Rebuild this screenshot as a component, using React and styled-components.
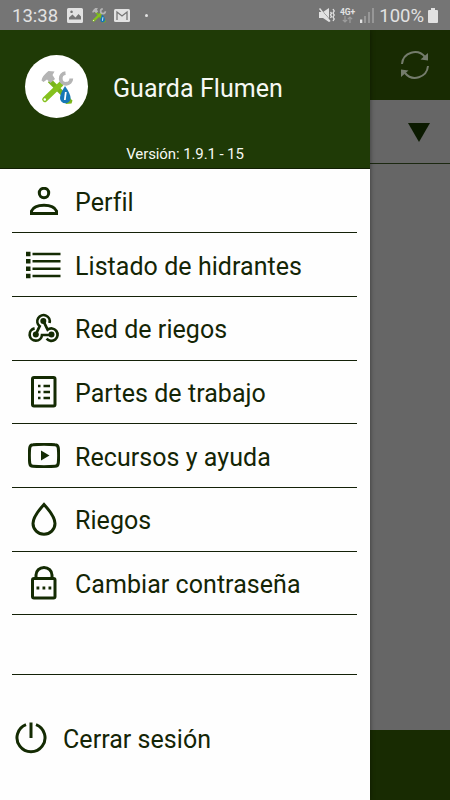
import styled, { createGlobalStyle } from "styled-components";

const MENU_ITEMS = [
  { label: "Perfil", Icon: PersonIcon },
  { label: "Listado de hidrantes", Icon: ListIcon },
  { label: "Red de riegos", Icon: NetworkIcon },
  { label: "Partes de trabajo", Icon: SheetIcon },
  { label: "Recursos y ayuda", Icon: VideoIcon },
  { label: "Riegos", Icon: DropIcon },
  { label: "Cambiar contraseña", Icon: LockIcon },
];

export default function App() {
  return (
    <>
      <GlobalStyle />
      <Phone>
        <StatusBar />
        <Screen>
          <ToolBar>
            <RefreshIcon />
          </ToolBar>
          <FilterBar>
            <Caret viewBox="0 0 22 19">
              <path d="M0 0h22L11 19z" fill="#0b1a00" />
            </Caret>
          </FilterBar>
          <Content />
          <BottomBar />
          <Drawer>
            <DrawerHeader>
              <Brand>
                <Avatar>
                  <ToolsIcon size={36} />
                </Avatar>
                <AppName>Guarda Flumen</AppName>
              </Brand>
              <Version>Versión: 1.9.1 - 15</Version>
            </DrawerHeader>
            <Menu>
              {MENU_ITEMS.map(({ label, Icon }) => (
                <MenuItem key={label}>
                  <IconSlot>
                    <Icon />
                  </IconSlot>
                  <Label>{label}</Label>
                </MenuItem>
              ))}
            </Menu>
            <Spacer />
            <Logout>
              <PowerIcon />
              <Label>Cerrar sesión</Label>
            </Logout>
          </Drawer>
        </Screen>
      </Phone>
    </>
  );
}

function StatusBar() {
  return (
    <StatusContainer>
      <StatusText>13:38</StatusText>
      <StatusIcons>
        <svg width="16" height="15" viewBox="0 0 16 15">
          <path
            fillRule="evenodd"
            fill="#e2e2e2"
            d="M1.5 0h13Q16 0 16 1.500v12Q16 15 14.500 15h-13Q0 15 0 13.500v-12Q0 0 1.500 0zM2 11.500h12V8.500l-2.500-2.500-3 3.500-3-3L2 9.500zM4.500 2.500a1.300 1.300 0 1 0 .1 0z"
          />
        </svg>
        <ToolsIcon size={16} />
        <svg width="16" height="13" viewBox="0 0 16 13">
          <rect width="16" height="13" rx="1.500" fill="#e2e2e2" />
          <path
            d="M3 11V3l5 4 5-4v8"
            fill="none"
            stroke="#757575"
            strokeWidth="1.300"
          />
        </svg>
        <Dot />
      </StatusIcons>
      <StatusRight>
        <svg width="16" height="16" viewBox="0 0 16 16">
          <path d="M0 5h4l6-4v14l-6-4H0z" fill="#e2e2e2" />
          <path d="M0 0l11 13" stroke="#757575" strokeWidth="1" />
          <path d="M.5 1.500l10.500 13" stroke="#e2e2e2" strokeWidth="1.400" />
          <path
            d="M11.500 5l1 1.200-1 1.600 1 1.600-1 1.600M14 2l1.200 2-1.200 2 1.200 2-1.200 2 1.200 2-1.200 2"
            fill="none"
            stroke="#e2e2e2"
            strokeWidth="1.300"
          />
        </svg>
        <Network>
          <span>4G+</span>
          <svg width="11" height="7" viewBox="0 0 11 7">
            <path
              d="M3 0v6M.8 3.800L3 6l2.200-2.200M8 7V1M5.800 3.200L8 1l2.200 2.200"
              fill="none"
              stroke="#9d9d9d"
              strokeWidth="1.200"
            />
          </svg>
        </Network>
        <svg width="14" height="15" viewBox="0 0 14 15">
          <path d="M0 11.500h2.300V15H0z" fill="#e2e2e2" />
          <path d="M4 8h2v7H4zM8 4h2v11H8zM12 0h2v15h-2z" fill="#979797" />
        </svg>
        <Battery>
          <StatusText>100%</StatusText>
          <svg width="10" height="15" viewBox="0 0 10 15">
            <path
              d="M3 0h4v2h2q1 0 1 1v11q0 1-1 1H1q-1 0-1-1V3q0-1 1-1h2z"
              fill="#e2e2e2"
            />
          </svg>
        </Battery>
      </StatusRight>
    </StatusContainer>
  );
}

function ToolsIcon({ size }) {
  return (
    <svg width={size} height={size} viewBox="0 0 36 36">
      <path d="M10.500 11.500L30 31" stroke="#79b51c" strokeWidth="4.600" />
      <path
        d="M22 15L5.800 30.500"
        stroke="#85c11e"
        strokeWidth="5.200"
        strokeLinecap="round"
      />
      <circle cx="5.800" cy="30.500" r="1.200" fill="#fff" />
      <path
        d="M2.500 11.500Q3 7 9.500 2l6 .5-2 3.500 2.500 4-4.500 4-3.500-3.500-3.500 2.500z"
        fill="#b4b4b4"
      />
      <path
        d="M26.500 4.200A5.300 5.300 0 1 0 32.300 9.500"
        fill="none"
        stroke="#b4b4b4"
        strokeWidth="3.800"
      />
      <path d="M29.500 28l4 3.500-1 3-6 .5z" fill="#79b51c" />
      <path
        d="M26 17q-5 8-5 12a5.300 5.300 0 0 0 10.600 0Q31.600 25 26 17z"
        fill="#1677b6"
      />
      <path d="M26.800 23l-1 8" stroke="#fff" strokeWidth="1.800" />
    </svg>
  );
}

function RefreshIcon() {
  return (
    <svg width="30" height="30" viewBox="0 0 30 30">
      <path
        d="M2 14A13 13 0 0 1 25 7M28 16A13 13 0 0 1 5 23"
        fill="none"
        stroke="#747c6c"
        strokeWidth="2"
      />
      <path d="M28 3v7.500l-7.500-1zM1 27v-7.500l7.500 1z" fill="#747c6c" />
    </svg>
  );
}

function PersonIcon() {
  return (
    <Glyph width="28" height="28" viewBox="0 0 28 28">
      <circle cx="14" cy="6" r="4.700" />
      <path d="M1.500 26.500V24Q4 18.300 14 18.300T26.500 24v2.500z" />
    </Glyph>
  );
}

function ListIcon() {
  return (
    <Glyph width="35" height="28" viewBox="0 0 35 28">
      <path d="M0 3h4.500M0 10.300h4.500M0 17.700h4.500M0 25h4.500" strokeWidth="4.400" />
      <path d="M6.500 3H34.500M6.500 10.300H34.500M6.500 17.700H34.500M6.500 25H34.500" strokeWidth="2.500" />
    </Glyph>
  );
}

function NetworkIcon() {
  return (
    <Glyph width="32" height="30" viewBox="0 0 32 30">
      <path
        d="M21.500 10A6.200 6.200 0 1 0 11.700 13.200L7.800 21.300M6.600 15.400A6.200 6.200 0 1 0 14 22H23.500M18.600 25.600A6.200 6.200 0 1 0 19.600 16.700L15.300 7.900"
        strokeWidth="2.700"
      />
      <g fill="#142b03" stroke="none">
        <circle cx="15.300" cy="7.900" r="3" />
        <circle cx="7.800" cy="21.500" r="3" />
        <circle cx="23.500" cy="21.500" r="3" />
      </g>
    </Glyph>
  );
}

function SheetIcon() {
  return (
    <Glyph width="26" height="32" viewBox="0 0 26 32">
      <rect x="1.500" y="1.500" width="22.500" height="28.500" rx="1.500" />
      <path
        d="M7 10h2.500M7 16h2.500M7 22h2.500M12.500 10h6.500M12.500 16h6.500M12.500 22h6.500"
        strokeWidth="2.600"
      />
    </Glyph>
  );
}

function VideoIcon() {
  return (
    <Glyph width="32" height="25" viewBox="0 0 32 25">
      <path d="M5 1.700Q16 1 27 1.700 30 1.800 30.300 5 31 12.500 30.300 20 30 23.200 27 23.300 16 24 5 23.300 2 23.200 1.700 20 1 12.500 1.700 5 2 1.800 5 1.700z" />
      <path d="M13 7.500v10l8.500-5z" fill="#142b03" stroke="none" />
    </Glyph>
  );
}

function DropIcon() {
  return (
    <Glyph width="26" height="34" viewBox="0 0 26 34">
      <path d="M13 2.400Q2 14.500 2 21.500a11 10.700 0 0 0 22 0Q24 14.500 13 2.400z" />
    </Glyph>
  );
}

function LockIcon() {
  return (
    <Glyph width="26" height="34" viewBox="0 0 26 34">
      <rect x="1.500" y="12.500" width="22.500" height="19.500" rx="1.500" />
      <path d="M5 12.500V9a8 7.500 0 0 1 16 0v3.500" />
      <path d="M5.500 22h2.800M11.500 22h2.800M17.500 22h2.800" strokeWidth="2.800" />
    </Glyph>
  );
}

function PowerIcon() {
  return (
    <Glyph width="32" height="32" viewBox="0 0 32 32">
      <path d="M11 2.700A14 14 0 1 0 21 2.700M16 .5V16" />
    </Glyph>
  );
}

const GlobalStyle = createGlobalStyle`
  * {
    box-sizing: border-box;
  }

  body {
    margin: 0;
    overflow: hidden;
    font-family: Roboto, "Liberation Sans", sans-serif;
  }
`;

const Phone = styled.div`
  display: flex;
  flex-direction: column;
  width: 450px;
  height: 800px;
  background: #666666;
`;

const StatusContainer = styled.header`
  display: flex;
  align-items: center;
  height: 30px;
  padding: 0 12px;
  background: #757575;
  color: #e2e2e2;
`;

const StatusText = styled.span`
  padding-top: 1px;
  font-size: 18.5px;
  line-height: 30px;
`;

const StatusIcons = styled.div`
  display: flex;
  align-items: center;
  gap: 7.5px;
  margin-left: 9px;
`;

const Dot = styled.span`
  width: 3px;
  height: 3px;
  margin-left: 7px;
  border-radius: 50%;
  background: #e2e2e2;
`;

const StatusRight = styled.div`
  display: flex;
  align-items: center;
  gap: 5px;
  margin-left: auto;
`;

const Battery = styled.div`
  display: flex;
  align-items: center;
  gap: 4px;
`;

const Network = styled.div`
  display: flex;
  flex-direction: column;
  align-items: center;
  font-size: 8.5px;
  font-weight: 700;
  line-height: 8px;
`;

const Screen = styled.main`
  position: relative;
  display: flex;
  flex: 1;
  flex-direction: column;
`;

const ToolBar = styled.div`
  display: flex;
  justify-content: flex-end;
  align-items: center;
  height: 70px;
  padding-right: 20px;
  background: #182b02;
`;

const FilterBar = styled.div`
  display: flex;
  justify-content: flex-end;
  align-items: center;
  height: 64px;
  padding: 1px 20px 0 0;
  border-bottom: 1px solid #1b2810;
`;

const Caret = styled.svg`
  width: 22px;
  height: 19px;
`;

const Content = styled.div`
  flex: 1;
`;

const BottomBar = styled.div`
  height: 70px;
  background: #182b02;
`;

const Drawer = styled.nav`
  position: absolute;
  top: 0;
  bottom: 0;
  left: 0;
  display: flex;
  flex-direction: column;
  width: 370px;
  background: #fefefe;
  box-shadow: 0 0 5px rgba(0, 0, 0, 0.45);
  clip-path: inset(0 -8px 0 0);
`;

const DrawerHeader = styled.div`
  display: flex;
  flex-direction: column;
  height: 139px;
  background: #1f3a06;
  border-bottom: 1px solid #101e03;
  color: #f6f8f3;
`;

const Brand = styled.div`
  display: flex;
  align-items: center;
  gap: 25px;
  padding: 25px 0 0 25px;
`;

const Avatar = styled.div`
  display: flex;
  justify-content: center;
  align-items: center;
  width: 63px;
  height: 63px;
  border-radius: 50%;
  background: #ffffff;
`;

const AppName = styled.h1`
  margin: 3px 0 0;
  font-size: 25px;
  font-weight: 400;
  letter-spacing: 0.05px;
`;

const Version = styled.span`
  margin-top: 27px;
  text-align: center;
  font-size: 15px;
  line-height: 18px;
  letter-spacing: -0.1px;
`;

const Menu = styled.ul`
  margin: 0;
  padding: 0.6px 13px 0 12px;
  list-style: none;
`;

const MenuItem = styled.li`
  display: flex;
  align-items: center;
  height: 63.7px;
  border-bottom: 1px solid #142108;
`;

const IconSlot = styled.span`
  display: flex;
  justify-content: center;
  width: 63px;
`;

const Label = styled.span`
  padding-top: 4px;
  font-size: 25px;
  line-height: 30px;
  letter-spacing: 0.05px;
  color: #142505;
`;

const Spacer = styled.div`
  height: 59.5px;
  margin: 0 13px 0 12px;
  border-bottom: 1px solid #142108;
`;

const Logout = styled.div`
  display: flex;
  align-items: center;
  gap: 16px;
  padding: 46px 0 0 15px;
`;

const Glyph = styled.svg.attrs({
  fill: "none",
  stroke: "#142b03",
  strokeWidth: 3,
})`
  display: block;
  flex-shrink: 0;
`;
